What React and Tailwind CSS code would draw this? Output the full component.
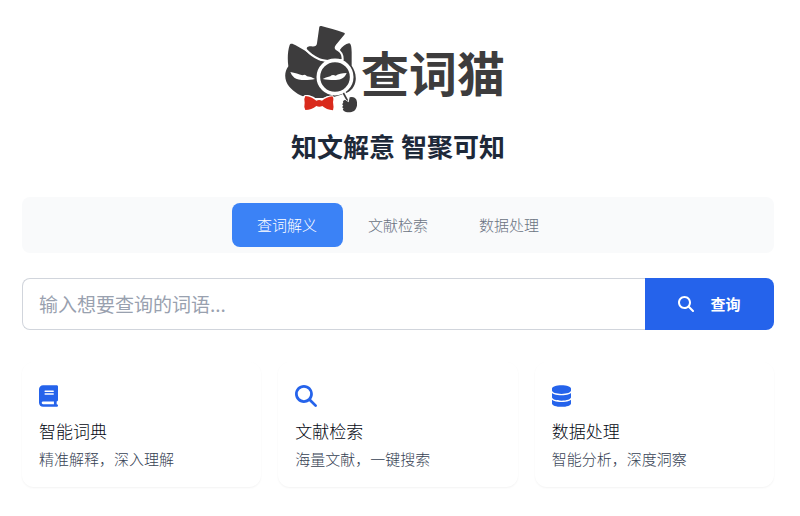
import { useState } from "react";
import { FaBook, FaDatabase, FaMagnifyingGlass } from "react-icons/fa6";

const tabs = ["查词解义", "文献检索", "数据处理"];

const features = [
  { icon: FaBook, size: "h-[22px] w-[19px]", title: "智能词典", text: "精准解释，深入理解" },
  { icon: FaMagnifyingGlass, size: "size-[22px]", title: "文献检索", text: "海量文献，一键搜索" },
  { icon: FaDatabase, size: "h-[22px] w-[19px]", title: "数据处理", text: "智能分析，深度洞察" },
];

function CatLogo() {
  return (
    <svg viewBox="42 30 216 264" className="h-[88px] w-[72px]" aria-hidden="true">
      {/* head */}
      <path
        fill="#3d3c3d"
        d="M56 90C58 84 66 86 74 91L100 106L150 138L196 130L206 106C214 94 224 87 234 85C240 84 242 98 242 112L242 152C249 162 256 178 254 196C252 214 240 232 220 236L188 246C180 238 166 244 156 249L133 249C122 242 108 236 96 244C76 236 54 220 46 200C40 184 42 168 52 154C49 132 50 108 56 90Z"
      />
      {/* hat */}
      <path
        fill="#3d3c3d"
        stroke="#fff"
        strokeWidth="12"
        paintOrder="stroke"
        d="M145 35Q147 32 151 33C172 38 196 46 219 53Q223 54 221 58L195 89C189 97 190 102 196 106C206 111 212 118 212 132C186 138 162 136 146 130C130 123 116 112 108 103C105 96 113 93 121 94C131 96 137 93 138 85Z"
      />
      {/* eyes */}
      <path
        fill="#fff"
        d="M58 171C72 174 84 177 94 181Q103 176 108 184L120 186L132 192C112 196 80 197 70 188Q62 183 58 171Z"
      />
      {/* magnifying glass */}
      <circle cx="192" cy="186" r="50" fill="#3d3c3d" stroke="#fff" strokeWidth="11" />
      <path
        fill="#fff"
        d="M227 174C212 175 202 177 194 182Q184 177 178 184Q163 187 155 192C174 195 198 197 210 192Q222 187 227 174Z"
      />
      <path fill="none" stroke="#fff" strokeWidth="12" d="M218 232L227 254" />
      <path fill="none" stroke="#3d3c3d" strokeWidth="5" d="M217 234L230 258" />
      {/* paw */}
      <path
        fill="#3d3c3d"
        stroke="#fff"
        strokeWidth="4"
        paintOrder="stroke"
        d="M222 254L233 262L236 247Q248 243 255 252C261 264 259 280 249 288C239 294 225 293 218 287Q213 284 218 280Q211 278 217 271Q211 268 217 263Q213 259 222 254Z"
      />
      {/* bow tie */}
      <path
        fill="#d92a1c"
        stroke="#fff"
        strokeWidth="6"
        paintOrder="stroke"
        d="M103 243C116 244 127 250 136 257Q144 253 153 257C162 250 172 245 184 244Q189 249 186 261Q189 276 186 286C174 285 161 280 154 273Q145 277 136 273C127 281 115 285 103 285Q98 276 101 263Q98 251 103 243Z"
      />
    </svg>
  );
}

function App() {
  const [active, setActive] = useState(0);
  const [word, setWord] = useState("");

  return (
    <div className="bg-white pt-[25px] pr-[26px] pb-7 pl-[22px] font-['Noto_Sans_CJK_SC',sans-serif]">
      <header className="flex flex-col items-center">
        <div className="flex items-center gap-1 pr-1.5">
          <CatLogo />
          <span className="pt-1 text-[48px] leading-[72px] font-bold text-[#3d3c3d]">查词猫</span>
        </div>
        <h1 className="mt-[15px] text-[26px] leading-9 font-bold text-gray-800">
          知文解意 智聚可知
        </h1>
      </header>

      <nav className="mt-[33px] flex justify-center rounded-lg bg-[#f9fafb] py-1.5">
        {tabs.map((tab, index) => (
          <button
            key={tab}
            type="button"
            onClick={() => setActive(index)}
            className={
              index === active
                ? "h-11 w-[111px] rounded-lg bg-[#3b82f6] text-[15px] font-light text-white"
                : "h-11 w-[111px] rounded-lg text-[15px] font-light text-gray-500"
            }
          >
            {tab}
          </button>
        ))}
      </nav>

      <form className="mt-[25px] flex h-[52px]" onSubmit={(e) => e.preventDefault()}>
        <input
          type="text"
          aria-label="输入想要查询的词语"
          placeholder="输入想要查询的词语..."
          value={word}
          onChange={(e) => setWord(e.target.value)}
          className="min-w-0 flex-1 rounded-l-lg border border-r-0 border-gray-300 px-4 text-[19px] outline-none placeholder:text-gray-400"
        />
        <button
          type="submit"
          className="flex w-[129px] items-center justify-center gap-4 rounded-r-lg bg-[#2563eb] text-[15px] font-bold text-white"
        >
          <FaMagnifyingGlass className="size-4" />
          查询
        </button>
      </form>

      <section className="mt-8 grid grid-cols-3 gap-[17px]">
        {features.map(({ icon: Icon, size, title, text }) => (
          <div key={title} className="rounded-xl bg-white px-[17px] pt-[23px] pb-4 shadow-xs">
            <Icon className={`${size} text-[#2563eb]`} />
            <h2 className="mt-3 text-[17px] leading-6 font-light text-gray-950">{title}</h2>
            <p className="mt-1 text-[15px] leading-6 font-light text-gray-700">{text}</p>
          </div>
        ))}
      </section>
    </div>
  );
}

export default App;
